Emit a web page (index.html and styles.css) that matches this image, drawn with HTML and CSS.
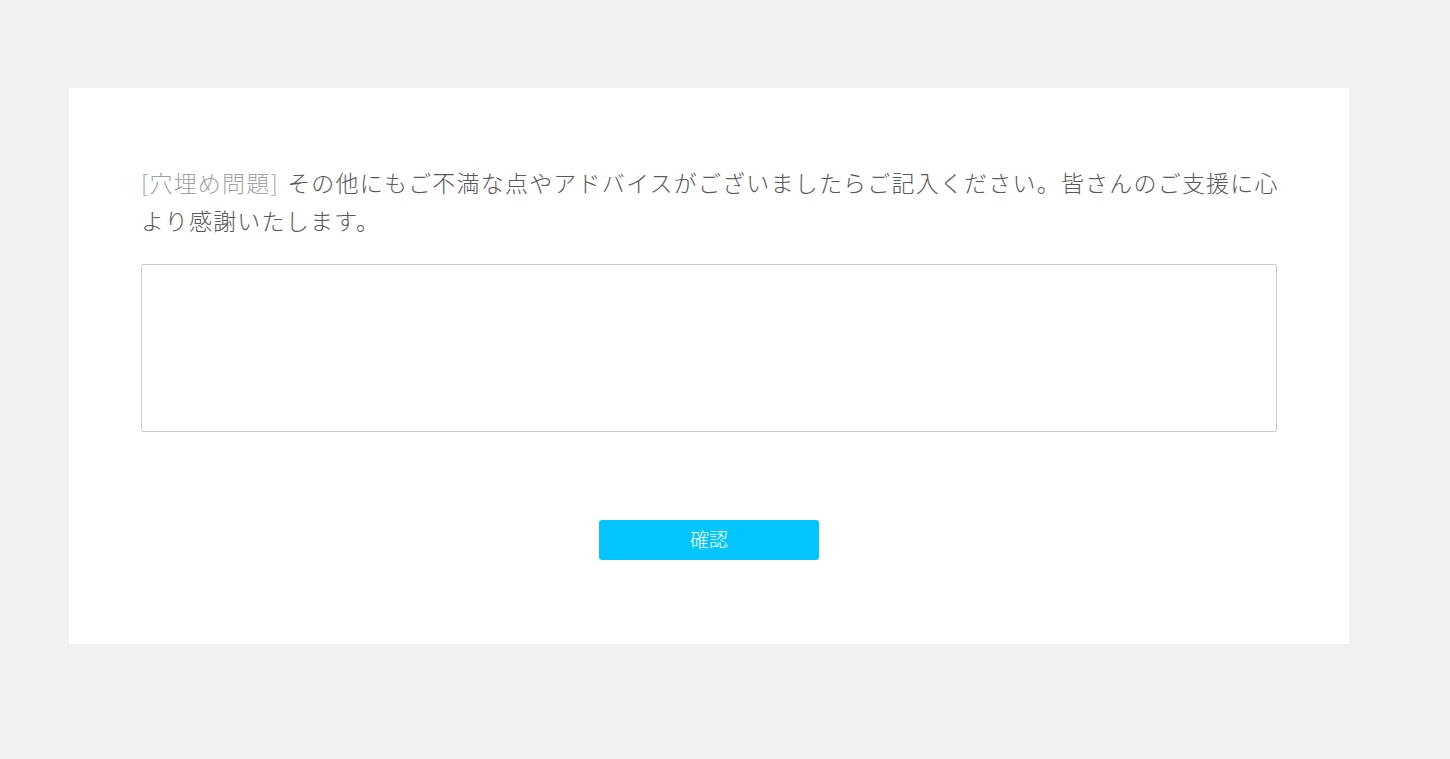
FILE: index.html
```html
<!DOCTYPE html>
<html lang="ja">
<head>
    <meta charset="UTF-8">
    <title>アンケート</title>
    <link rel="stylesheet" href="styles.css">
</head>
<body>
<div class="card">
    <p class="question"><span class="tag">[穴埋め問題]</span> その他にもご不満な点やアドバイスがございましたらご記入ください。皆さんのご支援に心より感謝いたします。</p>
    <textarea class="answer"></textarea>
    <div class="actions">
        <button type="button" class="btn-confirm">確認</button>
    </div>
</div>
</body>
</html>
```

FILE: styles.css
```css
body {
    margin: 0;
    background: #f1f1f1;
    font-family: "Noto Sans CJK JP", "Noto Sans", sans-serif;
    padding-top: 88px;
    height: 759px;
    box-sizing: border-box;
}

.card {
    width: 1280px;
    margin-left: 69px;
    background: #fff;
    padding: 75px 72px 84px;
    box-sizing: border-box;
}

.question {
    margin: 0 -12px 0 0;
    font-size: 23px;
    font-weight: 300;
    line-height: 38px;
    letter-spacing: 1.2px;
    color: #595959;
}

.tag {
    color: #a3a3a3;
    margin-right: 2px;
}

.answer {
    display: block;
    width: 100%;
    height: 168px;
    margin-top: 25px;
    border: 1px solid #ccc;
    border-radius: 2px;
    box-sizing: border-box;
    resize: none;
    outline: none;
}

.actions {
    margin-top: 88px;
    text-align: center;
}

.btn-confirm {
    width: 220px;
    height: 40px;
    padding: 0 0 4px;
    border: none;
    border-radius: 3px;
    background: #00c5ff;
    color: #fff;
    font-family: "Noto Sans CJK JP", sans-serif;
    font-size: 19px;
    font-weight: 300;
    cursor: pointer;
}
```
